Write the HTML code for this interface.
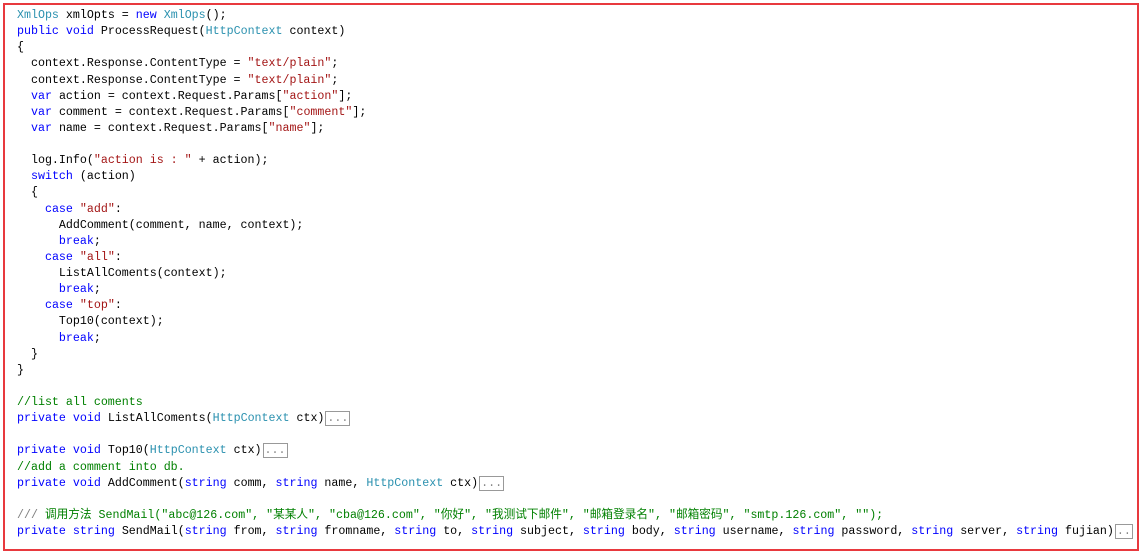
<!DOCTYPE html>
<html><head><meta charset="utf-8"><style>
html,body{margin:0;padding:0;background:#fff;width:1144px;height:554px;overflow:hidden}
.b{position:absolute;left:3px;top:3px;width:1132px;height:544px;border:2px solid #e8393e}
pre{position:absolute;left:17px;top:8px;margin:0;font-family:"Liberation Mono","Noto Sans CJK SC",monospace;font-size:11.65px;line-height:16.125px;color:#000;white-space:pre}
.k{color:#0000ff}.t{color:#2b91af}.s{color:#a31515}.c{color:#008000}.g{color:#808080}
.e{border:1px solid #999;color:#888;padding:0 1px;margin-left:1px}
</style></head><body><div class="b"></div>
<pre><span class="t">XmlOps</span> xmlOpts = <span class="k">new</span> <span class="t">XmlOps</span>();
<span class="k">public</span> <span class="k">void</span> ProcessRequest(<span class="t">HttpContext</span> context)
{
  context.Response.ContentType = <span class="s">"text/plain"</span>;
  context.Response.ContentType = <span class="s">"text/plain"</span>;
  <span class="k">var</span> action = context.Request.Params[<span class="s">"action"</span>];
  <span class="k">var</span> comment = context.Request.Params[<span class="s">"comment"</span>];
  <span class="k">var</span> name = context.Request.Params[<span class="s">"name"</span>];

  log.Info(<span class="s">"action is : "</span> + action);
  <span class="k">switch</span> (action)
  {
    <span class="k">case</span> <span class="s">"add"</span>:
      AddComment(comment, name, context);
      <span class="k">break</span>;
    <span class="k">case</span> <span class="s">"all"</span>:
      ListAllComents(context);
      <span class="k">break</span>;
    <span class="k">case</span> <span class="s">"top"</span>:
      Top10(context);
      <span class="k">break</span>;
  }
}

<span class="c">//list all coments</span>
<span class="k">private</span> <span class="k">void</span> ListAllComents(<span class="t">HttpContext</span> ctx)<span class="e">...</span>

<span class="k">private</span> <span class="k">void</span> Top10(<span class="t">HttpContext</span> ctx)<span class="e">...</span>
<span class="c">//add a comment into db.</span>
<span class="k">private</span> <span class="k">void</span> AddComment(<span class="k">string</span> comm, <span class="k">string</span> name, <span class="t">HttpContext</span> ctx)<span class="e">...</span>

<span class="g">///</span><span class="c"> 调用方法 SendMail("abc@126.com", "某某人", "cba@126.com", "你好", "我测试下邮件", "邮箱登录名", "邮箱密码", "smtp.126.com", "");</span>
<span class="k">private</span> <span class="k">string</span> SendMail(<span class="k">string</span> from, <span class="k">string</span> fromname, <span class="k">string</span> to, <span class="k">string</span> subject, <span class="k">string</span> body, <span class="k">string</span> username, <span class="k">string</span> password, <span class="k">string</span> server, <span class="k">string</span> fujian)<span class="e">..</span></pre>
</body></html>
